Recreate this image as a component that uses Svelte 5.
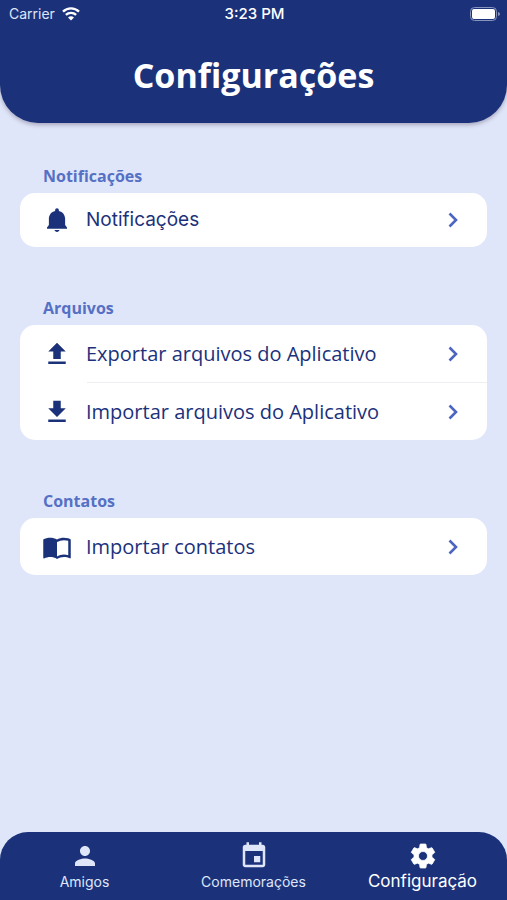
<script>
  const sections = [
    { title: 'Notificações', items: [{ label: 'Notificações', icon: 'bell', system: true }] },
    {
      title: 'Arquivos',
      items: [
        { label: 'Exportar arquivos do Aplicativo', icon: 'upload' },
        { label: 'Importar arquivos do Aplicativo', icon: 'download' }
      ]
    },
    { title: 'Contatos', items: [{ label: 'Importar contatos', icon: 'book' }] }
  ];

  const tabs = [
    { label: 'Amigos', icon: 'person' },
    { label: 'Comemorações', icon: 'event' },
    { label: 'Configuração', icon: 'settings' }
  ];

  let active = $state('Configuração');

  const icons = {
    bell: 'M12 21.500c1 0 1.900-.7 2-1.500h-4c.1.800 1 1.500 2 1.500zm6.500-5.500v-5c0-3.070-1.900-5.600-5-6.300V4c0-.83-.67-1.500-1.500-1.500s-1.500.67-1.500 1.500v.7c-3.100.7-5 3.230-5 6.300v5L4 18v1h16v-1z',
    upload: 'M9 16h6v-6h4l-7-7-7 7h4zm-4 2h14v2H5z',
    download: 'M19 9h-4V3H9v6H5l7 7 7-7zM5 18v2h14v-2H5z',
    book: 'M21 5c-1.11-.35-2.33-.5-3.5-.5-1.95 0-4.05.4-5.5 1.5-1.45-1.1-3.55-1.5-5.5-1.5S2.45 4.9 1 6v14.65c0 .25.25.5.5.5.1 0 .15-.05.25-.05C3.1 20.45 5.05 20 6.5 20c1.95 0 4.05.4 5.5 1.5 1.35-.85 3.8-1.5 5.5-1.5 1.65 0 3.35.3 4.75 1.05.1.05.15.05.25.05.25 0 .5-.25.5-.5V6c-.6-.45-1.25-.75-2-1zm0 13.5c-1.1-.35-2.3-.5-3.5-.5-1.7 0-4.15.65-5.5 1.5V8c1.35-.85 3.8-1.5 5.5-1.5 1.2 0 2.4.15 3.5.5v11.5z',
    person: 'M12 12c2.21 0 4-1.79 4-4s-1.79-4-4-4-4 1.79-4 4 1.79 4 4 4zm0 2c-2.67 0-8 1.34-8 4v2h16v-2c0-2.66-5.33-4-8-4z',
    event: 'M17 12h-5v5h5v-5zM16 1v2H8V1H6v2H5c-1.11 0-1.99.9-1.99 2L3 19c0 1.1.89 2 2 2h14c1.1 0 2-.9 2-2V5c0-1.1-.9-2-2-2h-1V1h-2zm3 18H5V8h14v11z',
    settings: 'M19.14 12.94c.04-.3.06-.61.06-.94 0-.32-.02-.64-.07-.94l2.03-1.58c.18-.14.23-.41.12-.61l-1.92-3.32c-.12-.22-.37-.29-.59-.22l-2.39.96c-.5-.38-1.03-.7-1.62-.94l-.36-2.54c-.04-.24-.24-.41-.48-.41h-3.84c-.24 0-.43.17-.47.41l-.36 2.54c-.59.24-1.13.57-1.62.94l-2.39-.96c-.22-.08-.47 0-.59.22L2.74 8.87c-.12.21-.08.47.12.61l2.03 1.58c-.05.3-.09.63-.09.94s.02.64.07.94l-2.03 1.58c-.18.14-.23.41-.12.61l1.92 3.32c.12.22.37.29.59.22l2.39-.96c.5.38 1.03.7 1.62.94l.36 2.54c.05.24.24.41.48.41h3.84c.24 0 .44-.17.47-.41l.36-2.54c.59-.24 1.13-.56 1.62-.94l2.39.96c.22.08.47 0 .59-.22l1.92-3.32c.12-.22.07-.47-.12-.61l-2.01-1.58zM12 15.6c-1.98 0-3.6-1.62-3.6-3.6s1.62-3.6 3.6-3.6 3.6 1.62 3.6 3.6-1.62 3.6-3.6 3.6z'
  };
</script>

{#snippet glyph(name)}
  <svg class="icon" class:gear={name === 'settings'} viewBox="0 0 24 24" aria-hidden="true"><path d={icons[name]} /></svg>
{/snippet}

<div class="screen">
  <header>
    <div class="status">
      <span class="carrier">
        Carrier
        <svg class="wifi" viewBox="0 0 18 14" aria-hidden="true">
          <path d="M1 4.600a11.600 11.600 0 0 1 16 0M3.900 7.900a7.400 7.400 0 0 1 10.200 0" />
          <path class="dot" d="M9 13.600L6 10.600a4.300 4.300 0 0 1 6 0z" />
        </svg>
      </span>
      <span class="time">3:23 PM</span>
      <svg class="battery" viewBox="0 0 30 14" aria-hidden="true">
        <rect class="shell" x="0.5" y="0.5" width="26" height="13" rx="4" />
        <rect x="2" y="2" width="23" height="10" rx="2" />
        <path class="cap" d="M28 5v4q2-.7 2-2t-2-2z" />
      </svg>
    </div>
    <h1>Configurações</h1>
  </header>

  <main>
    {#each sections as section}
      <section>
        <h2>{section.title}</h2>
        <ul>
          {#each section.items as item}
            <li>
              <button class="row" class:system={item.system}>
                {@render glyph(item.icon)}
                <span class="label">{item.label}</span>
                <svg class="chevron" viewBox="0 0 10 16" aria-hidden="true"><path d="M1.5 1.5L8 8l-6.500 6.500" /></svg>
              </button>
            </li>
          {/each}
        </ul>
      </section>
    {/each}
  </main>

  <nav>
    {#each tabs as tab}
      <button class="tab" class:active={active === tab.label} onclick={() => (active = tab.label)}>
        {@render glyph(tab.icon)}
        <span>{tab.label}</span>
      </button>
    {/each}
  </nav>
</div>

<style>
  :global(body) {
    margin: 0;
    background: #e0e6f9;
  }

  .screen {
    display: flex;
    flex-direction: column;
    min-height: 100vh;
    background: #e0e6f9;
    font-family: 'Open Sans', 'Noto Sans', sans-serif;
    color: #1b327b;
  }

  button {
    border: 0;
    margin: 0;
    padding: 0;
    background: none;
    color: inherit;
    font: inherit;
    cursor: pointer;
  }

  header {
    height: 123px;
    border-radius: 0 0 38px 38px;
    background: #1b327b;
    color: #fff;
    box-shadow: 0 2px 4px rgba(60, 50, 80, 0.35);
  }

  .status {
    display: grid;
    grid-template-columns: 1fr auto 1fr;
    align-items: center;
    height: 27px;
    padding: 0 7px 0 9px;
    font: 14px/20px Inter, sans-serif;
  }

  .carrier {
    display: flex;
    align-items: center;
    gap: 7px;
    color: #dfe5f7;
  }

  .wifi {
    width: 18px;
    height: 14px;
    fill: none;
    stroke: #fff;
    stroke-width: 2.4;
  }

  .wifi .dot {
    fill: #fff;
    stroke: none;
  }

  .time {
    font-size: 15px;
    font-weight: 500;
  }

  .battery {
    justify-self: end;
    width: 30px;
    height: 14px;
    fill: #fff;
  }

  .battery .shell {
    fill: none;
    stroke: #8794bd;
  }

  .battery .cap {
    fill: #8794bd;
  }

  h1 {
    margin: 0;
    padding-top: 24px;
    text-align: center;
    font-size: 34px;
    line-height: 48px;
    font-weight: 700;
  }

  main {
    flex: 1;
    display: flex;
    flex-direction: column;
    gap: 50px;
    padding: 42px 20px;
  }

  h2 {
    margin: 0 0 5px;
    padding-left: 23px;
    font-size: 16px;
    line-height: 23px;
    font-weight: 700;
    color: #5570c4;
  }

  ul {
    margin: 0;
    padding: 0;
    list-style: none;
    border-radius: 15px;
    background: #fff;
    overflow: hidden;
  }

  li + li::before {
    content: '';
    display: block;
    height: 1px;
    margin-left: 67px;
    background: #eeeef2;
  }

  .row {
    display: flex;
    align-items: center;
    width: 100%;
    height: 57px;
    padding: 0 29px 0 22px;
    text-align: left;
    font-size: 20px;
    line-height: 28px;
  }

  .row.system {
    height: 54px;
    font-family: Inter, sans-serif;
    font-size: 19px;
  }

  .icon {
    flex: none;
    width: 30px;
    height: 30px;
    fill: #1b327b;
  }

  .label {
    flex: 1;
    margin-left: 14px;
  }

  .chevron {
    width: 10px;
    height: 16px;
    fill: none;
    stroke: #4c66c0;
    stroke-width: 2.6;
  }

  nav {
    display: grid;
    grid-template-columns: repeat(3, 1fr);
    height: 68px;
    border-radius: 28px 28px 0 0;
    background: #1b327b;
    color: #dfe6fa;
    font-family: Inter, sans-serif;
  }

  .tab {
    display: flex;
    flex-direction: column;
    align-items: center;
    padding-top: 9px;
    font-size: 14px;
    line-height: 22px;
  }

  .tab .icon {
    fill: currentColor;
  }

  .tab .gear {
    stroke: currentColor;
    stroke-width: 0.6;
    stroke-linejoin: round;
  }

  .tab.active {
    color: #fff;
    font-size: 17px;
    line-height: 20px;
  }
</style>
